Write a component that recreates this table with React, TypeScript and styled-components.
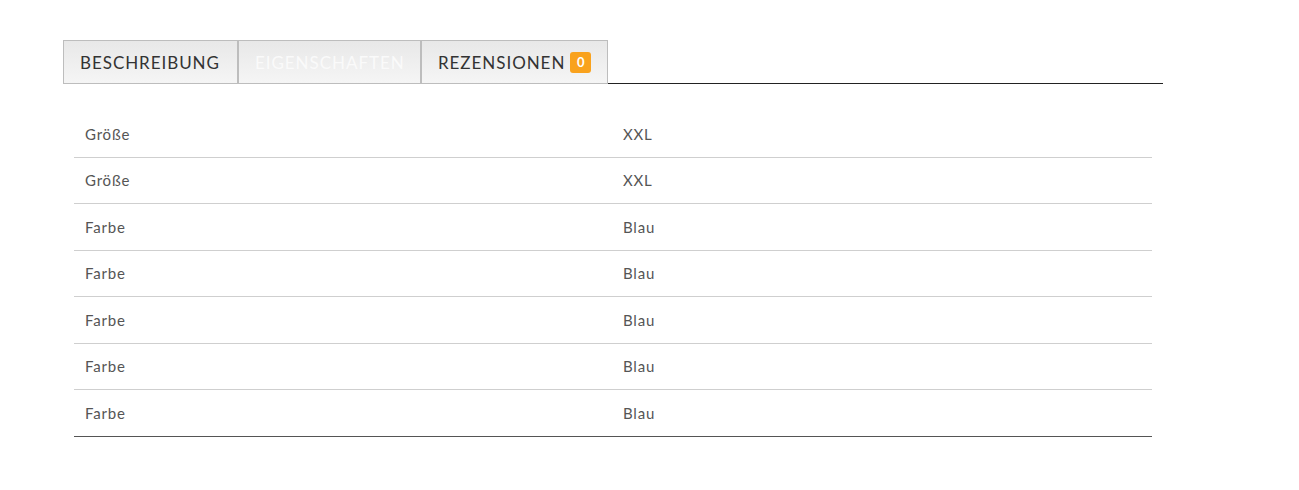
import React from "react";
import styled, { createGlobalStyle } from "styled-components";

const Global = createGlobalStyle`
  html, body { margin: 0; padding: 0; background: #fff; }
  body { font-family: "Lato", "Open Sans", sans-serif; }
`;

const Page = styled.div`
  padding: 40px 0 0 63px;
  width: 1100px;
`;

const TabBar = styled.div`
  display: flex;
  align-items: stretch;
  height: 44px;
`;

const Tab = styled.div<{ $active?: boolean; $w: number }>`
  box-sizing: border-box;
  width: ${(p) => p.$w}px;
  display: flex;
  align-items: center;
  gap: 5px;
  padding: 0 16px;
  border: 1px solid #bdbdbd;
  background: linear-gradient(#e8e8e8, #f5f5f5);
  color: ${(p) => (p.$active ? "#fafafa" : "#333")};
  font-size: 17px;
  letter-spacing: 0.95px;
  white-space: nowrap;
`;

const Filler = styled.div`
  flex: 1;
  border-bottom: 1px solid #222;
`;

const Badge = styled.span`
  display: inline-flex;
  align-items: center;
  justify-content: center;
  width: 21px;
  height: 21px;
  border-radius: 3px;
  background: #f9a21d;
  color: #fff;
  font-weight: 700;
  font-size: 13px;
  letter-spacing: 0;
`;

const Table = styled.div`
  margin: 27px 11px 0 11px;
  border-bottom: 1px solid #555;
`;

const Row = styled.div<{ $last?: boolean }>`
  display: grid;
  grid-template-columns: 538px 1fr;
  height: ${(p) => (p.$last ? "46px" : "46.5px")};
  box-sizing: border-box;
  align-items: center;
  padding: 0 11px;
  border-bottom: ${(p) => (p.$last ? "none" : "1px solid #cfcfcf")};
  color: #555;
  font-size: 15px;
  letter-spacing: 0.8px;
`;

const rows: [string, string][] = [
  ["Größe", "XXL"],
  ["Größe", "XXL"],
  ["Farbe", "Blau"],
  ["Farbe", "Blau"],
  ["Farbe", "Blau"],
  ["Farbe", "Blau"],
  ["Farbe", "Blau"],
];

export default function App() {
  return (
    <>
      <Global />
      <Page>
        <TabBar>
          <Tab $w={175}>BESCHREIBUNG</Tab>
          <Tab $w={183} $active>EIGENSCHAFTEN</Tab>
          <Tab $w={187}>
            REZENSIONEN <Badge>0</Badge>
          </Tab>
          <Filler />
        </TabBar>
        <Table>
          {rows.map(([k, v], i) => (
            <Row key={i} $last={i === rows.length - 1}>
              <span>{k}</span>
              <span>{v}</span>
            </Row>
          ))}
        </Table>
      </Page>
    </>
  );
}
